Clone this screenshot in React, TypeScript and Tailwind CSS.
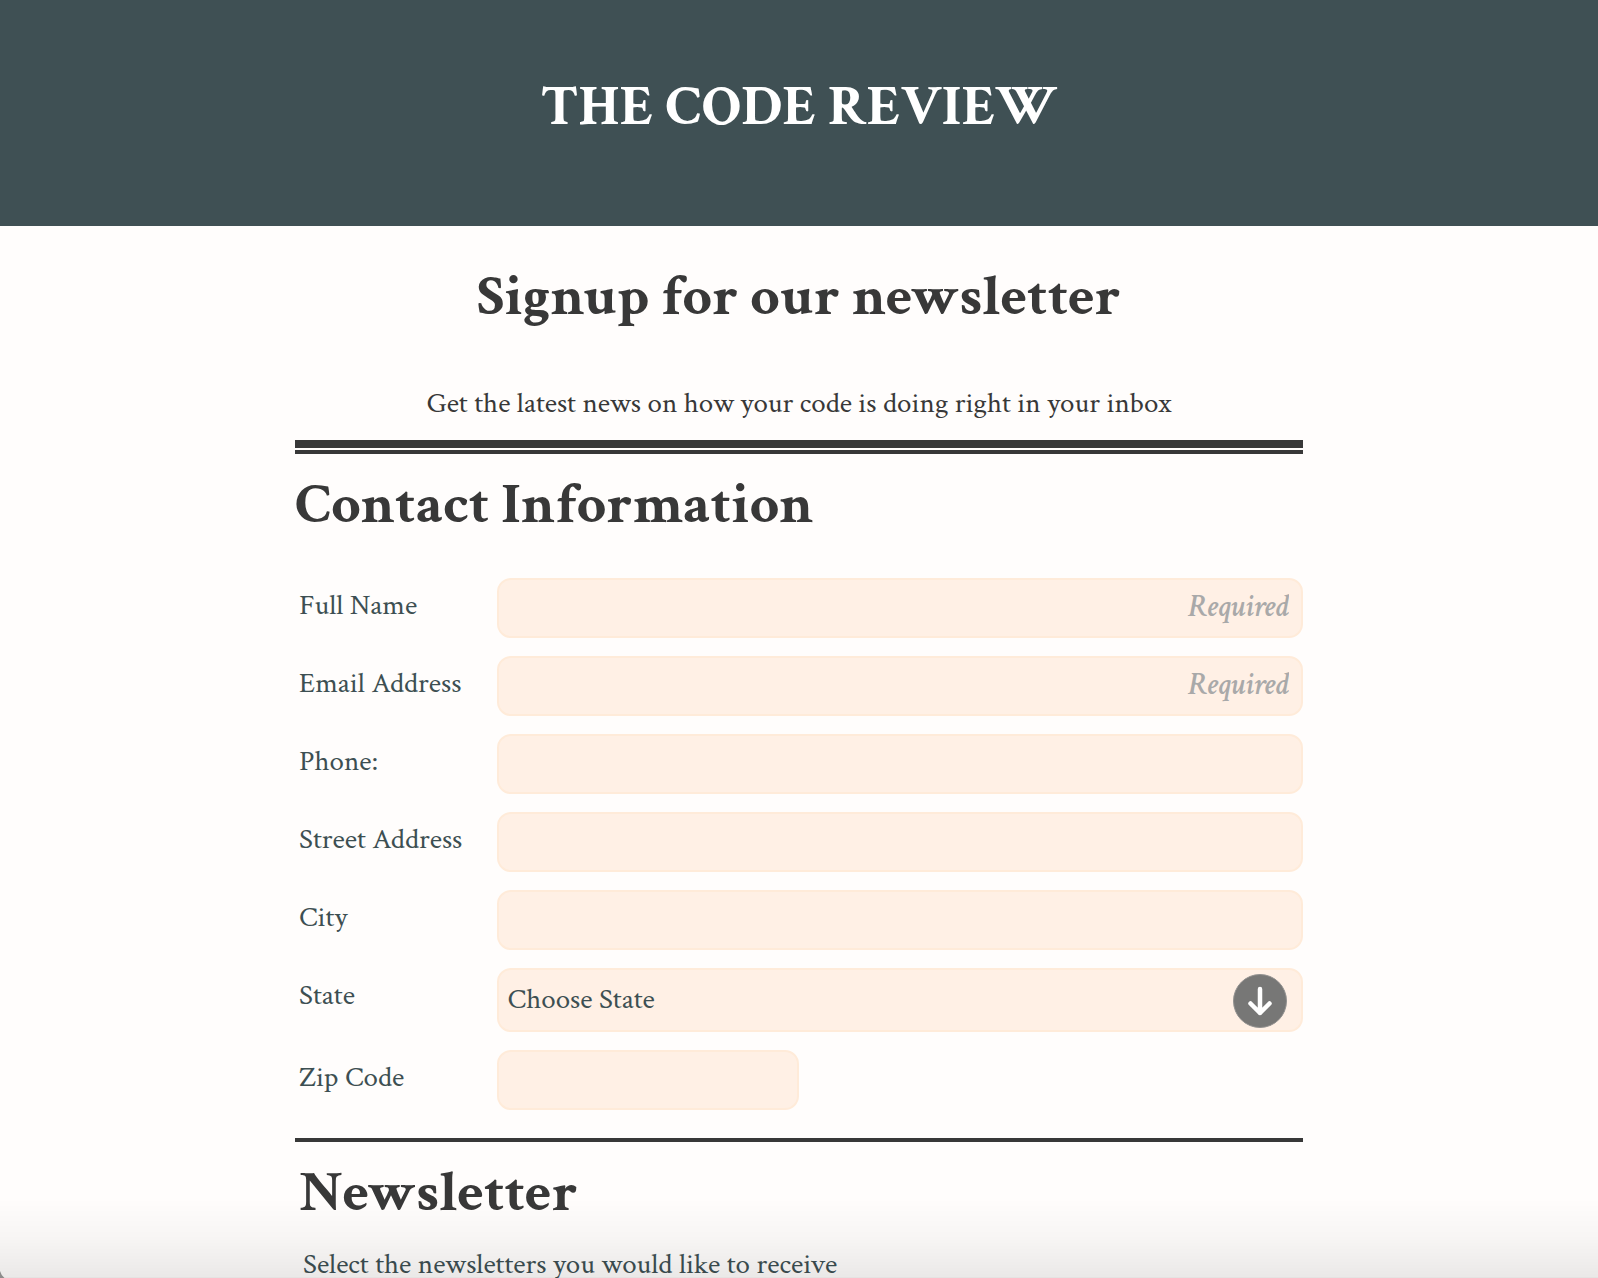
import React from "react";

const textRows = [
  { id: "full-name", label: "Full Name", type: "text", placeholder: "Required" },
  { id: "email", label: "Email Address", type: "email", placeholder: "Required" },
  { id: "phone", label: "Phone:", type: "tel", placeholder: "" },
  { id: "street", label: "Street Address", type: "text", placeholder: "" },
  { id: "city", label: "City", type: "text", placeholder: "" },
];

const fieldBase =
  "rounded-[14px] border-2 border-[#ffebd9] bg-[#fff0e5] text-[29px] text-[#3d4f52] outline-none focus:border-[#3f5054]";

function Label({ htmlFor, children }: { htmlFor: string; children: React.ReactNode }) {
  return (
    <label htmlFor={htmlFor} className="w-1/5 shrink-0 whitespace-nowrap pt-[13px] pl-1 text-[29px] leading-7">
      {children}
    </label>
  );
}

function DownArrow() {
  return (
    <svg
      viewBox="0 0 54 54"
      className="pointer-events-none absolute top-1.5 right-4 size-[54px]"
      aria-hidden="true"
    >
      <circle cx="27" cy="27" r="26.5" fill="#777776" stroke="#929190" strokeWidth="1" />
      <path
        d="M27 15v24M17.5 29.5L27 39l9.5-9.5"
        fill="none"
        stroke="#fff"
        strokeWidth="4.5"
        strokeLinecap="round"
        strokeLinejoin="round"
      />
    </svg>
  );
}

export default function App() {
  return (
    <div className="relative min-h-screen bg-[#fffdfc] font-['Crimson_Text','Liberation_Serif',serif] text-[#383838]">
      <header className="bg-[#3f5054] pt-[77px] pb-[89px] text-center">
        <h1 className="text-[58px] leading-[60px] font-bold text-white">THE CODE REVIEW</h1>
      </header>

      <main className="mx-auto w-full max-w-[1008px] pt-[41px]">
        <div className="text-center">
          <h2 className="text-[58px] leading-[60px] font-bold">Signup for our newsletter</h2>
          <p className="mt-[62px] text-[29px] leading-7">
            Get the latest news on how your code is doing right in your inbox
          </p>
        </div>

        <form className="mt-[23px] text-[#3d4f52]">
          <section className="border-t-8 border-[#383838]">
            <div className="mt-0.5 border-t-4 border-[#383838] pt-[21px]">
              <h2 className="text-[58px] leading-[60px] font-bold text-[#383838]">Contact Information</h2>
            </div>

            <div className="mt-[43px] flex flex-col gap-[18px]">
              {textRows.map((row) => (
                <div key={row.id} className="flex">
                  <Label htmlFor={row.id}>{row.label}</Label>
                  <input
                    id={row.id}
                    type={row.type}
                    placeholder={row.placeholder}
                    className={`${fieldBase} h-[60px] min-w-0 flex-1 pr-3 pb-0.5 pl-[9px] placeholder:text-right placeholder:text-[31px] placeholder:font-semibold placeholder:text-[#a9a9a9] placeholder:italic`}
                  />
                </div>
              ))}

              <div className="flex">
                <Label htmlFor="state">State</Label>
                <div className="relative min-w-0 flex-1">
                  <select id="state" className={`${fieldBase} block h-16 w-full appearance-none pr-20 pl-[9px]`}>
                    <option>Choose State</option>
                  </select>
                  <DownArrow />
                </div>
              </div>

              <div className="flex">
                <Label htmlFor="zip">Zip Code</Label>
                <input id="zip" type="text" className={`${fieldBase} h-[60px] w-[30%] px-[9px]`} />
              </div>
            </div>
          </section>

          <section className="mt-7 border-t-4 border-[#383838] pt-[21px]">
            <h2 className="pl-1 text-[58px] leading-[60px] font-bold text-[#383838]">Newsletter</h2>
            <p className="mt-[27px] pl-2 text-[29px] leading-7">
              Select the newsletters you would like to receive
            </p>
          </section>
        </form>
      </main>

      <div className="pointer-events-none absolute inset-x-0 bottom-0 h-20 border-b border-black/10 bg-linear-to-b from-transparent via-black/3 to-black/8">
        <svg viewBox="0 0 5 7" className="absolute -bottom-px left-0 h-[7px] w-[5px]" aria-hidden="true">
          <path d="M0 0Q1 4 4.5 7H0Z" fill="#8d8c8b" />
        </svg>
      </div>
    </div>
  );
}
